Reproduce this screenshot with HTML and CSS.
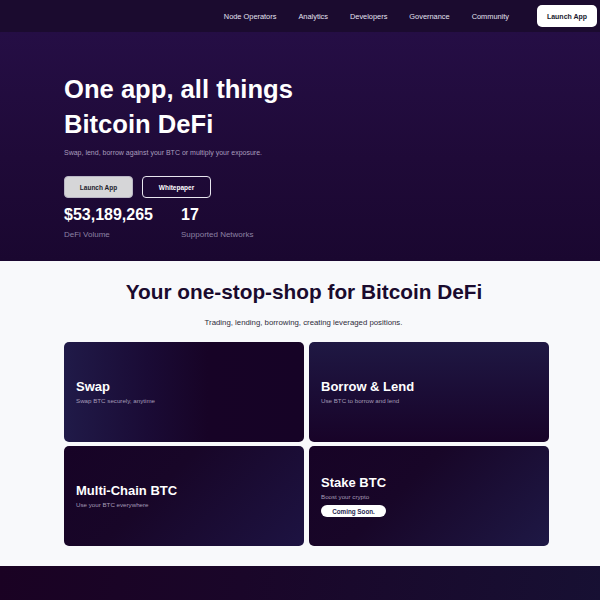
FILE: index.html
```html
<!DOCTYPE html>
<html lang="en">
<head>
<meta charset="utf-8">
<title>Bitcoin DeFi</title>
<link rel="stylesheet" href="styles.css">
</head>
<body>
  <header class="nav">
    <nav class="nav-links">
      <a href="#">Node Operators</a>
      <a href="#">Analytics</a>
      <a href="#">Developers</a>
      <a href="#">Governance</a>
      <a href="#">Community</a>
    </nav>
    <a class="nav-cta" href="#">Launch App</a>
  </header>

  <section class="hero">
    <h1 class="hero-title">One app, all things<br>Bitcoin DeFi</h1>
    <p class="hero-sub">Swap, lend, borrow against your BTC or multiply your exposure.</p>
    <div class="hero-actions">
      <a class="btn btn-light" href="#">Launch App</a>
      <a class="btn btn-outline" href="#">Whitepaper</a>
    </div>
    <div class="stats">
      <div class="stat stat-volume">
        <div class="stat-value">$53,189,265</div>
        <div class="stat-label">DeFi Volume</div>
      </div>
      <div class="stat">
        <div class="stat-value">17</div>
        <div class="stat-label">Supported Networks</div>
      </div>
    </div>
  </section>

  <section class="features">
    <h2 class="features-title">Your one-stop-shop for Bitcoin DeFi</h2>
    <p class="features-sub">Trading, lending, borrowing, creating leveraged positions.</p>
    <div class="cards">
      <div class="card card-swap">
        <h3 class="card-title">Swap</h3>
        <p class="card-text">Swap BTC securely, anytime</p>
      </div>
      <div class="card card-borrow">
        <h3 class="card-title">Borrow &amp; Lend</h3>
        <p class="card-text">Use BTC to borrow and lend</p>
      </div>
      <div class="card card-chain">
        <h3 class="card-title">Multi-Chain BTC</h3>
        <p class="card-text">Use your BTC everywhere</p>
      </div>
      <div class="card card-stake">
        <h3 class="card-title">Stake BTC</h3>
        <p class="card-text">Boost your crypto</p>
        <span class="pill">Coming Soon.</span>
      </div>
    </div>
  </section>

  <section class="footer-band"></section>
</body>
</html>
```

FILE: styles.css
```css
* { box-sizing: border-box; }

html, body {
  margin: 0;
  padding: 0;
}

body {
  font-family: "Liberation Sans", Arial, sans-serif;
  background: #f8f9fb;
  color: #fff;
}

a { text-decoration: none; color: inherit; }

/* top navigation */
.nav {
  height: 32px;
  background: #1b0b2f;
  display: flex;
  align-items: center;
  justify-content: flex-end;
  padding: 0 3px 0 0;
}

.nav-links {
  display: flex;
  gap: 22px;
  margin-right: 28px;
}

.nav-links a {
  font-size: 7.4px;
  color: #e4e2f0;
}

.nav-cta {
  width: 60px;
  height: 22px;
  border-radius: 5px;
  background: #fff;
  color: #1a1a2e;
  font-size: 7px;
  font-weight: bold;
  display: flex;
  align-items: center;
  justify-content: center;
}

/* hero */
.hero {
  background: linear-gradient(180deg, #250e45 0%, #1f0a38 55%, #1a0730 100%);
  padding: 40px 64px 20px;
}

.hero-title {
  margin: 0;
  font-size: 25.6px;
  line-height: 35px;
  font-weight: bold;
  color: #fff;
}

.hero-sub {
  margin: 6px 0 0;
  font-size: 7px;
  line-height: 10px;
  color: #a99dbd;
}

.hero-actions {
  display: flex;
  gap: 9px;
  margin-top: 18px;
}

.btn {
  width: 69px;
  height: 22px;
  border-radius: 4px;
  font-size: 6.5px;
  font-weight: bold;
  display: flex;
  align-items: center;
  justify-content: center;
}

.btn-light {
  background: #d6d6d8;
  border: 1px solid #b9b6c4;
  color: #1d1d2c;
}

.btn-outline {
  border: 1.5px solid #e8e6ef;
  color: #fff;
}

.stats {
  display: flex;
  margin-top: 7px;
}

.stat-volume { width: 117px; }

.stat-value {
  font-size: 16px;
  line-height: 20px;
  font-weight: bold;
  color: #fff;
}

.stat-label {
  margin-top: 4px;
  font-size: 8px;
  line-height: 12px;
  color: #8d82a3;
}

/* features */
.features {
  background: #f8f9fb;
  padding: 17px 0 20px;
}

.features-title {
  margin: 0 0 0 8px;
  text-align: center;
  font-size: 20.8px;
  line-height: 28px;
  font-weight: bold;
  color: #1a0b2e;
}

.features-sub {
  margin: 11px 0 0 7px;
  text-align: center;
  font-size: 7.8px;
  line-height: 12px;
  color: #2e2c3a;
}

.cards {
  margin: 13px 0 0 64px;
  display: grid;
  grid-template-columns: 240px 240px;
  grid-auto-rows: 100px;
  gap: 4px 5px;
}

.card {
  border-radius: 5px;
  padding: 0 12px;
  display: flex;
  flex-direction: column;
  justify-content: center;
  align-items: flex-start;
}

.card-swap   { background: linear-gradient(90deg, #201a48 0%, #1a0b35 35%, #170326 60%, #160326 100%); }
.card-borrow { background: linear-gradient(180deg, #1f1843 0%, #1b0d36 50%, #180328 100%); }
.card-chain  { background: linear-gradient(135deg, #170326 0%, #180628 40%, #1d1342 100%); }
.card-stake  { background: linear-gradient(135deg, #170326 0%, #180628 40%, #1e1845 100%); }

.card-title {
  margin: 0;
  font-size: 13px;
  line-height: 16px;
  font-weight: bold;
  color: #fff;
}

.card-text {
  margin: 1px 0 0;
  font-size: 6.2px;
  line-height: 9px;
  color: #a59cb8;
}

.pill {
  margin-top: 4px;
  width: 65px;
  height: 12px;
  border-radius: 6px;
  background: #fff;
  color: #27264e;
  font-size: 6.3px;
  font-weight: bold;
  display: flex;
  align-items: center;
  justify-content: center;
}

/* dark band below */
.footer-band {
  height: 60px;
  background: linear-gradient(100deg, #1a0223 0%, #1a0629 40%, #171033 100%);
}
```
